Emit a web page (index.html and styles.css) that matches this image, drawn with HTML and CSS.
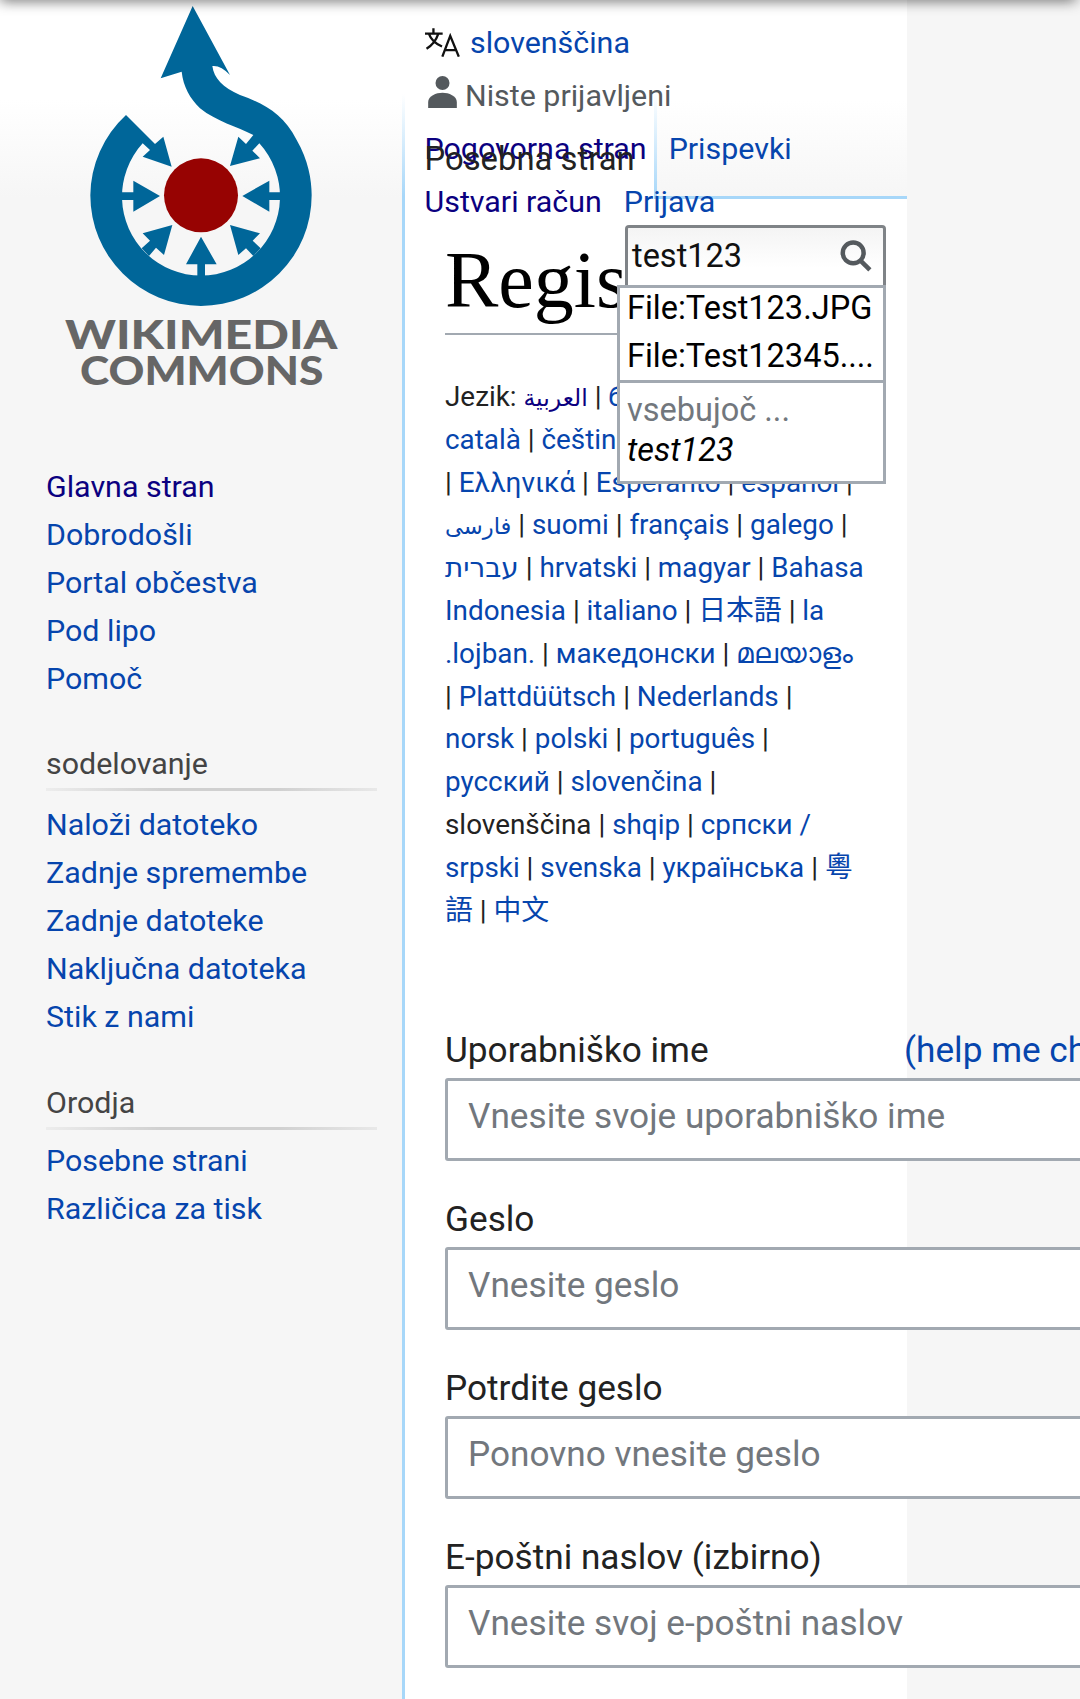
FILE: index.html
```html
<!DOCTYPE html>
<html lang="sl">
<head>
<meta charset="utf-8">
<title>Registracija</title>
<link rel="stylesheet" href="styles.css">
</head>
<body>
<div class="page">
  <div class="top-shadow"></div>
  <aside class="sidebar">
    <svg class="logo" viewBox="0 0 1200 1260" aria-label="Wikimedia Commons">
      <path class="logo-blue" d="M578 18 L690 225 Q662 195 637 198 C642 235 668 262 720 285 C790 310 850 340 890 420 C925 480 935 540 935 586 A332 332 0 0 1 271 586 A332 332 0 0 1 378 345 L465 432 L490 410 L515 500 L428 470 L450 450 L428 430 A237 237 0 1 0 778 430 L757 452 L780 475 L690 498 L715 410 L738 432 L760 405 C710 380 650 365 600 325 C570 295 550 260 545 215 L482 235 Z"/>
      <polygon class="logo-blue" points="360,577 400,577 400,542 480,588 400,635 400,600 360,600"/>
      <polygon class="logo-blue" points="846,577 808,577 808,542 727,588 808,635 808,600 846,600"/>
      <polygon class="logo-blue" points="592,835 592,793 558,793 603,710 650,793 615,793 615,835"/>
      <polygon class="logo-blue" points="517,675 428,700 450,722 425,745 447,768 468,743 492,765"/>
      <polygon class="logo-blue" points="690,675 780,700 758,722 782,745 760,768 738,745 715,765"/>
      <circle class="logo-red" cx="603" cy="586" r="111"/>
      <text class="logo-text" x="195" y="1046" textLength="817" lengthAdjust="spacingAndGlyphs">WIKIMEDIA</text>
      <text class="logo-text" x="240" y="1156" textLength="730" lengthAdjust="spacingAndGlyphs">COMMONS</text>
    </svg>
    <nav class="nav nav-first">
      <a class="visited" href="#">Glavna stran</a>
      <a href="#">Dobrodošli</a>
      <a href="#">Portal občestva</a>
      <a href="#">Pod lipo</a>
      <a href="#">Pomoč</a>
    </nav>
    <nav class="nav">
      <h3 class="nav-title">sodelovanje</h3>
      <a href="#">Naloži datoteko</a>
      <a href="#">Zadnje spremembe</a>
      <a href="#">Zadnje datoteke</a>
      <a href="#">Naključna datoteka</a>
      <a href="#">Stik z nami</a>
    </nav>
    <nav class="nav nav-tools">
      <h3 class="nav-title">Orodja</h3>
      <a href="#">Posebne strani</a>
      <a href="#">Različica za tisk</a>
    </nav>
  </aside>

  <main class="main">
    <div class="tab-fade"></div>
    <header class="head">
      <div class="head-row">
        <svg class="icon-translate" viewBox="15 20 105 88" aria-hidden="true">
          <path d="M40 21V37M14 37H68M55 37C49 55 38 71 19 83M26 37C32 54 47 68 66 76M67 107L91 44L117 107M75 87H108"/>
        </svg>
        <a href="#">slovenščina</a>
      </div>
      <div class="head-row head-user">
        <svg class="icon-user" viewBox="24 162 86 96" aria-hidden="true">
          <circle cx="67" cy="183" r="21"/>
          <path d="M24 258V240C24 222 48 212 67 212C86 212 110 222 110 240V258Z"/>
        </svg>
        <span>Niste prijavljeni</span>
      </div>
      <div class="head-row head-links">
        <a class="visited" href="#">Pogovorna stran</a>
        <a href="#">Prispevki</a>
      </div>
      <div class="head-row head-links">
        <a class="visited" href="#">Ustvari račun</a>
        <a href="#">Prijava</a>
      </div>
      <div class="tab-label">Posebna stran</div>
    </header>

    <div class="search">
      <div class="search-box">
        <span class="search-value">test123</span>
        <svg class="icon-search" viewBox="1320 715 95 95" aria-hidden="true">
          <circle cx="1358" cy="755" r="30"/>
          <path d="M1379 777L1406 804"/>
        </svg>
      </div>
      <div class="suggest">
        <div class="suggest-list">
          <div class="suggest-item">File:Test123.JPG</div>
          <div class="suggest-item">File:Test12345....</div>
        </div>
        <div class="suggest-special">
          <div class="suggest-hint">vsebujoč ...</div>
          <div class="suggest-term">test123</div>
        </div>
      </div>
    </div>

    <div class="content">
      <h1 class="title">Registracija</h1>
      <p class="langs">
        Jezik: <a class="visited lang-ar" href="#" lang="ar" dir="rtl">العربية</a> | <a href="#">беларуская</a> |<br>
        <a href="#">català</a> | <a href="#">čeština</a> | <a href="#">Deutsch</a> |<br>
        | <a href="#">Ελληνικά</a> | <a href="#">Esperanto</a> | <a href="#">español</a> |<br>
        <a class="lang-fa" href="#" lang="fa" dir="rtl">فارسی</a> | <a href="#">suomi</a> | <a href="#">français</a> | <a href="#">galego</a> |<br>
        <a href="#" lang="he" dir="rtl">עברית</a> | <a href="#">hrvatski</a> | <a href="#">magyar</a> | <a href="#">Bahasa</a><br>
        <a href="#">Indonesia</a> | <a href="#">italiano</a> | <a href="#" lang="ja">日本語</a> | <a href="#">la</a><br>
        <a href="#">.lojban.</a> | <a href="#">македонски</a> | <a href="#" lang="ml">മലയാളം</a><br>
        | <a href="#">Plattdüütsch</a> | <a href="#">Nederlands</a> |<br>
        <a href="#">norsk</a> | <a href="#">polski</a> | <a href="#">português</a> |<br>
        <a href="#">русский</a> | <a href="#">slovenčina</a> |<br>
        slovenščina | <a href="#">shqip</a> | <a href="#">српски /</a><br>
        <a href="#">srpski</a> | <a href="#">svenska</a> | <a href="#">українська</a> | <a href="#" lang="zh-Hant">粵</a><br>
        <a href="#" lang="zh-Hant">語</a> | <a href="#" lang="zh-Hans">中文</a>
      </p>

      <form class="form">
        <div class="field">
          <div class="field-label"><label for="u">Uporabniško ime</label><a href="#">(help me choose)</a></div>
          <input id="u" class="input" type="text" placeholder="Vnesite svoje uporabniško ime">
        </div>
        <div class="field">
          <div class="field-label"><label for="p1">Geslo</label></div>
          <input id="p1" class="input" type="password" placeholder="Vnesite geslo">
        </div>
        <div class="field">
          <div class="field-label"><label for="p2">Potrdite geslo</label></div>
          <input id="p2" class="input" type="password" placeholder="Ponovno vnesite geslo">
        </div>
        <div class="field">
          <div class="field-label"><label for="e">E-poštni naslov (izbirno)</label></div>
          <input id="e" class="input" type="email" placeholder="Vnesite svoj e-poštni naslov">
        </div>
      </form>
    </div>
  </main>
</div>
</body>
</html>
```
FILE: styles.css
```css
* { box-sizing: border-box; }
html, body { margin: 0; padding: 0; }
body {
  font-family: Roboto, "Noto Sans CJK JP", "Noto Sans", "DejaVu Sans", sans-serif;
  color: #222;
  background: #f6f6f6;
}
a { color: #0645ad; text-decoration: none; }
a.visited { color: #0b0080; }

.page {
  position: relative;
  display: flex;
  width: 1080px;
  height: 1699px;
  overflow: hidden;
  background: #f6f6f6;
}
.top-shadow {
  position: absolute;
  z-index: 5;
  left: 0;
  top: -10px;
  width: 1076px;
  height: 10px;
  box-shadow: 0 0 14px rgba(0, 0, 0, .7);
}

/* Sidebar */
.sidebar {
  flex: none;
  width: 405px;
  height: 100%;
  border-right: 3px solid #a7d7f9;
  border-image: linear-gradient(#fff 95px, #a7d7f9 197px) 1;
  background: linear-gradient(#fff 100px, #f6f6f6 197px);
}
.logo { display: block; width: 400px; height: 420px; }
.logo-blue { fill: #069; }
.logo-red { fill: #970302; }
.logo-text {
  font-family: Lato, sans-serif;
  font-weight: 900;
  font-size: 118px;
  fill: #666;
}
.nav { margin: 41px 0 0 46px; width: 331px; }
.nav-first { margin-top: 43px; }
.nav-tools { margin-top: 42px; }
.nav a {
  display: block;
  height: 48px;
  font-size: 30.4px;
  line-height: 48px;
  white-space: nowrap;
}
.nav-title {
  margin: 0 0 10px;
  height: 47px;
  font-size: 30.4px;
  font-weight: 400;
  line-height: 40px;
  color: #444;
  background: linear-gradient(to right, rgba(200, 200, 200, .2), #d0d0d0 35%, #d0d0d0 70%, rgba(200, 200, 200, .3)) left bottom / 100% 3px no-repeat;
}
.nav-tools .nav-title { margin-bottom: 7px; }

/* Main column */
.main {
  position: relative;
  flex: none;
  width: 502px;
  height: 100%;
  background: #fff;
}
.tab-fade {
  position: absolute;
  left: 249px;
  top: 95px;
  width: 253px;
  height: 104px;
  border-left: 3px solid #a7d7f9;
  border-bottom: 3px solid #a7d7f9;
  border-image: linear-gradient(#fff 0, #a7d7f9 100%) 1;
  background: linear-gradient(#fff 5%, #f6f6f6 100%);
}
.tab-fade::after {
  content: "";
  position: absolute;
  left: -3px;
  right: 0;
  bottom: -3px;
  height: 3px;
  background: #a7d7f9;
}
.head { position: relative; padding: 16px 0 0 19.5px; font-size: 30.4px; }
.head-row {
  display: flex;
  align-items: center;
  height: 53px;
  white-space: nowrap;
}
.head-user { color: #54595d; }
.head-links { gap: 22px; }
.tab-label {
  position: absolute;
  left: 19.5px;
  top: 133px;
  font-size: 32.8px;
  line-height: 53px;
  color: #222;
}
.icon-translate {
  flex: none;
  width: 35px;
  height: 29px;
  margin-right: 10.5px;
  fill: none;
  stroke: #111;
  stroke-width: 7;
}
.icon-user {
  flex: none;
  width: 29px;
  height: 32px;
  margin: -7px 8px 0 3.5px;
  fill: #54595d;
}

/* Search overlay */
.search {
  position: absolute;
  z-index: 3;
  left: 212px;
  top: 225px;
  width: 269px;
}
.search-box {
  display: flex;
  align-items: center;
  justify-content: space-between;
  height: 60px;
  margin-left: 8px;
  padding: 0 10px 2px 4px;
  border: 3px solid #7f8387;
  border-bottom: 0;
  border-radius: 4px 4px 0 0;
  background: linear-gradient(#f4f4f4, #fff 70%);
  font-size: 32.5px;
  color: #111;
}
.icon-search {
  width: 33px;
  height: 33px;
  fill: none;
  stroke: #54595d;
  stroke-width: 13;
}
.suggest {
  height: 199px;
  border: 3px solid #a2a9b1;
  background: #fff;
  font-size: 32.5px;
  color: #000;
}
.suggest-list {
  height: 92px;
  padding-left: 7px;
  white-space: nowrap;
  overflow: hidden;
}
.suggest-item { height: 47.5px; line-height: 41.5px; }
.suggest-special {
  height: 101px;
  padding: 7px 0 0 7px;
  border-top: 3px solid #a2a9b1;
  line-height: 40px;
}
.suggest-hint { color: #72777d; }
.suggest-term { font-style: italic; }

/* Content */
.content { padding-left: 40px; }
.title {
  width: 425px;
  margin: 0;
  border-bottom: 2px solid #a2a9b1;
  font-family: "Liberation Serif", serif;
  font-size: 80px;
  font-weight: 400;
  line-height: 105px;
  white-space: nowrap;
  color: #000;
}
.langs {
  margin: 41px 0 0;
  font-size: 27.85px;
  line-height: 42.8px;
  white-space: nowrap;
}
.langs a { line-height: 1; }
.lang-ar { font-size: 23.5px; }
.lang-fa { font-size: 22.6px; }
.form { margin-top: 97.6px; width: 700px; }
.field { margin-bottom: 38.4px; }
.field-label {
  display: flex;
  height: 47.6px;
  font-size: 35.2px;
  line-height: 41px;
  white-space: nowrap;
}
.field-label label { flex: none; width: 459px; }
.input {
  display: block;
  width: 100%;
  height: 83px;
  padding: 0 20px 6px;
  border: 3px solid #a2a9b1;
  border-radius: 3px;
  background: #fff;
  font-family: inherit;
  font-size: 35.2px;
  outline: 0;
}
.input::placeholder { color: #72777d; opacity: 1; }
```
